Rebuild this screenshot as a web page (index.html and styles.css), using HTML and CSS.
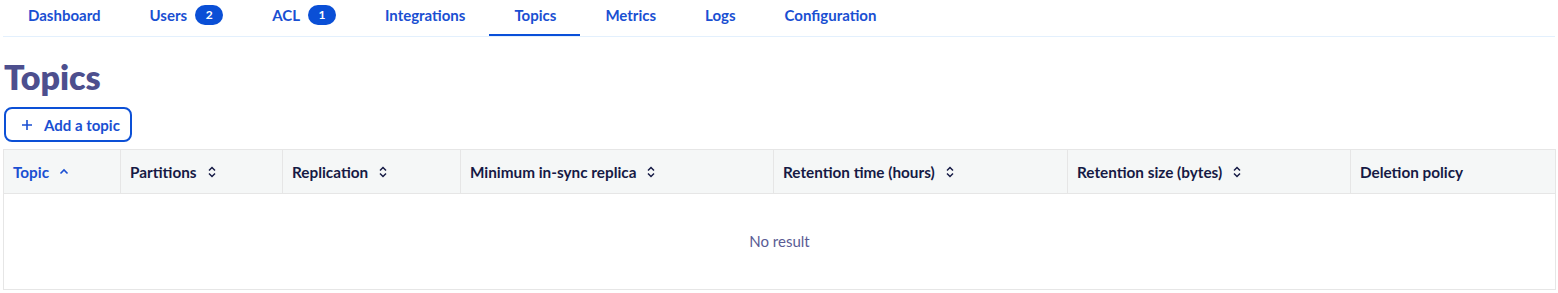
FILE: index.html
```html
<!DOCTYPE html>
<html lang="en">
<head>
<meta charset="utf-8">
<title>Topics</title>
<link rel="stylesheet" href="styles.css">
</head>
<body>
<div class="page">
  <nav class="tabs">
    <a class="tab">Dashboard</a>
    <a class="tab">Users <span class="badge">2</span></a>
    <a class="tab">ACL <span class="badge">1</span></a>
    <a class="tab">Integrations</a>
    <a class="tab active">Topics</a>
    <a class="tab">Metrics</a>
    <a class="tab">Logs</a>
    <a class="tab">Configuration</a>
  </nav>

  <h1 class="title">Topics</h1>

  <button class="add-btn">
    <svg class="plus" width="12" height="12" viewBox="0 0 12 12"><path d="M6 1v10M1 6h10" stroke="currentColor" stroke-width="1.6" fill="none"/></svg>
    <span>Add a topic</span>
  </button>

  <table class="grid">
    <colgroup>
      <col class="c1"><col class="c2"><col class="c3"><col class="c4"><col class="c5"><col class="c6"><col class="c7">
    </colgroup>
    <thead>
      <tr>
        <th class="sorted"><span class="th">Topic <svg class="sort" width="10" height="12" viewBox="0 0 10 12"><path d="M1.5 7.5 5 4l3.5 3.5" stroke="currentColor" stroke-width="1.6" fill="none"/></svg></span></th>
        <th><span class="th">Partitions <svg class="sort" width="10" height="14" viewBox="0 0 10 14"><path d="M2 5.5 5 2.5l3 3M2 8.5l3 3 3-3" stroke="currentColor" stroke-width="1.5" fill="none"/></svg></span></th>
        <th><span class="th">Replication <svg class="sort" width="10" height="14" viewBox="0 0 10 14"><path d="M2 5.5 5 2.5l3 3M2 8.5l3 3 3-3" stroke="currentColor" stroke-width="1.5" fill="none"/></svg></span></th>
        <th><span class="th">Minimum in-sync replica <svg class="sort" width="10" height="14" viewBox="0 0 10 14"><path d="M2 5.5 5 2.5l3 3M2 8.5l3 3 3-3" stroke="currentColor" stroke-width="1.5" fill="none"/></svg></span></th>
        <th><span class="th">Retention time (hours) <svg class="sort" width="10" height="14" viewBox="0 0 10 14"><path d="M2 5.5 5 2.5l3 3M2 8.5l3 3 3-3" stroke="currentColor" stroke-width="1.5" fill="none"/></svg></span></th>
        <th><span class="th">Retention size (bytes) <svg class="sort" width="10" height="14" viewBox="0 0 10 14"><path d="M2 5.5 5 2.5l3 3M2 8.5l3 3 3-3" stroke="currentColor" stroke-width="1.5" fill="none"/></svg></span></th>
        <th><span class="th">Deletion policy</span></th>
      </tr>
    </thead>
    <tbody>
      <tr><td class="empty" colspan="7">No result</td></tr>
    </tbody>
  </table>
</div>
</body>
</html>
```

FILE: styles.css
```css
* { box-sizing: border-box; }
html, body { margin: 0; background: #ffffff; }
body {
  font-family: "Lato", "Liberation Sans", sans-serif;
  color: #1b1c4a;
}
.page {
  padding: 0 3px;
}
.tabs {
  display: flex;
  height: 37px;
  border-bottom: 1px solid #e3f0fd;
}
.tab {
  display: flex;
  align-items: center;
  gap: 8px;
  padding: 0 24px 5px 25px;
  height: 36px;
  font-size: 15px;
  font-weight: 700;
  color: #1a4fd2;
  border-bottom: 2px solid transparent;
  cursor: pointer;
}
.tab.active {
  border-bottom-color: #0a50d9;
}
.badge {
  display: inline-flex;
  align-items: center;
  justify-content: center;
  width: 28px;
  height: 20px;
  border-radius: 10px;
  background: #0a4fd6;
  color: #ffffff;
  font-size: 12px;
  font-weight: 700;
}
.title {
  margin: 20px 0 0 1px;
  font-size: 34px;
  line-height: 40px;
  font-weight: 800;
  color: #4d4f8e;
}
.add-btn {
  margin: 10px 0 0 1px;
  display: flex;
  align-items: center;
  gap: 11px;
  height: 35px;
  padding: 0 10px 0 15px;
  border: 2px solid #0c50d6;
  border-radius: 8px;
  background: #ffffff;
  color: #1a4fd2;
  font-family: inherit;
  font-size: 15px;
  font-weight: 700;
}
.plus { display: block; }
.grid {
  margin-top: 7px;
  width: 1552px;
  border-collapse: collapse;
  table-layout: fixed;
  border: 1px solid #e6e6e6;
}
.c1 { width: 117px; }
.c2 { width: 162px; }
.c3 { width: 178px; }
.c4 { width: 313px; }
.c5 { width: 294px; }
.c6 { width: 283px; }
.c7 { width: 205px; }
.grid th {
  height: 44px;
  padding: 0 9px;
  text-align: left;
  background: #f5f7f7;
  border: 1px solid #e6e6e6;
  font-size: 15.3px;
  font-weight: 700;
  color: #161a45;
  white-space: nowrap;
}
.grid th.sorted { color: #1a4fd2; }
.th {
  display: inline-flex;
  align-items: center;
  gap: 10px;
}
.sort { display: block; }
.empty {
  height: 96px;
  text-align: center;
  font-size: 15px;
  color: #5a5b94;
  padding-top: 0;
}
```
